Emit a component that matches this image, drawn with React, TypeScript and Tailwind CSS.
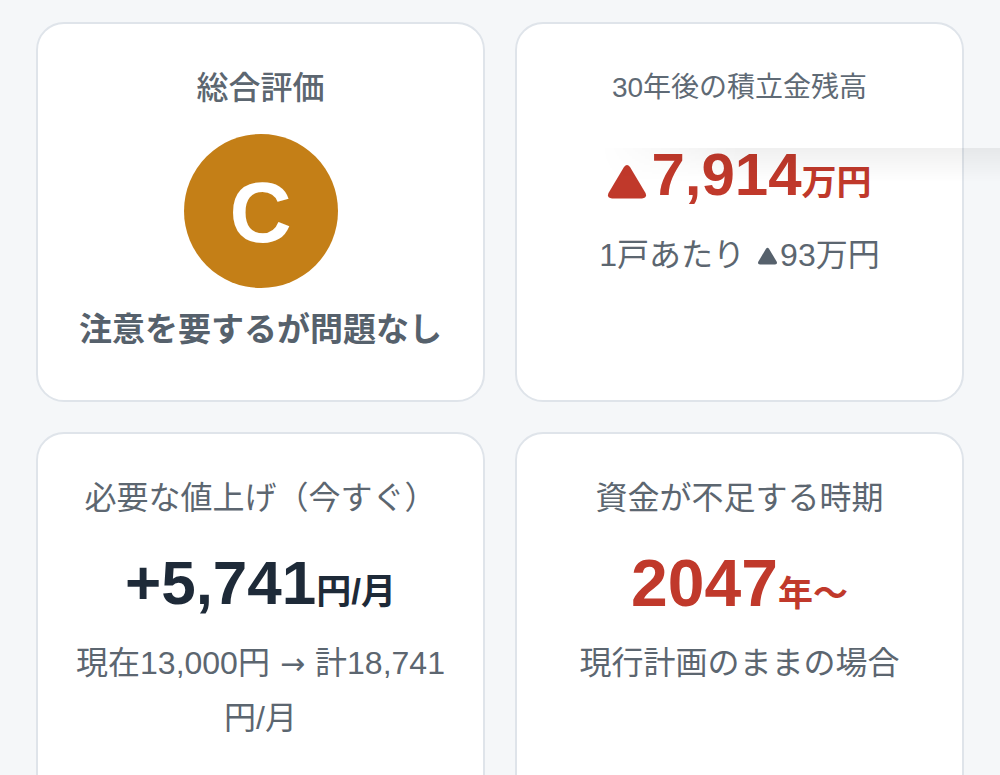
import React from "react";

const font = { fontFamily: '"Liberation Sans", "Noto Sans CJK JP", sans-serif' };
const arrowFont = { fontFamily: '"DejaVu Sans", sans-serif' };

function Tri({ w, h, color, className }: { w: number; h: number; color: string; className?: string }) {
  return (
    <svg width={w} height={h} viewBox="0 0 40 36" className={className}>
      <path
        d="M17 3.5 Q20 -0.5 23 3.5 L38.5 29.5 Q40.5 34.5 35 35 L5 35 Q-0.5 34.5 1.5 29.5 Z"
        fill={color}
      />
    </svg>
  );
}

function Card({ children }: { children: React.ReactNode }) {
  return (
    <div className="h-[380px] rounded-[28px] border-2 border-[#dfe4ea] bg-white px-[28px] pt-[40px] flex flex-col items-center text-center">
      {children}
    </div>
  );
}

export default function App() {
  return (
    <div style={font} className="relative min-h-[775px] overflow-hidden bg-[#f5f7f9] px-[36px] pt-[22px]">
      <div className="grid grid-cols-2 gap-[30px]">
        <Card>
          <div className="text-[32px] leading-[48px] font-medium text-[#5c6670]">総合評価</div>
          <div className="mt-[22px] flex h-[154px] w-[154px] items-center justify-center rounded-full bg-[#c47f17] text-[86px] font-bold leading-none text-white">
            <span className="mt-[2px]">C</span>
          </div>
          <div className="mt-[18px] text-[33px] leading-[48px] font-bold text-[#56616c]">注意を要するが問題なし</div>
        </Card>
        <Card>
          <div className="text-[28px] leading-[48px] text-[#5f6a75]">30年後の積立金残高</div>
          <div className="mt-[27px] flex items-baseline font-bold leading-[72px] text-[#c0392b]">
            <Tri w={40} h={37} color="#c0392b" className="mr-[4px] self-center mt-[4px]" />
            <span className="text-[60px]">7,914</span>
            <span className="text-[35px]">万円</span>
          </div>
          <div className="mt-[10px] flex items-center text-[32px] leading-[52px] text-[#5c6670]">
            <span>1戸あたり</span>
            <Tri w={21} h={18} color="#56616c" className="ml-[12px] mr-[2px] mt-[2px]" />
            <span>93万円</span>
          </div>
        </Card>
        <Card>
          <div className="text-[32px] leading-[48px] text-[#5c6670]">必要な値上げ（今すぐ）</div>
          <div className="mt-[25px] flex items-baseline font-bold leading-[72px] text-[#1e2a38]">
            <span className="text-[62px]">+5,741</span>
            <span className="text-[35px]">円/月</span>
          </div>
          <div className="mt-[8px] flex flex-col items-center text-[32px] leading-[55px] text-[#5c6670]">
            <div className="flex items-center whitespace-nowrap">
              <span>現在13,000円</span>
              <span style={arrowFont} className="mx-[10px] text-[30px]">→</span>
              <span>計18,741</span>
            </div>
            <div>円/月</div>
          </div>
        </Card>
        <Card>
          <div className="text-[32px] leading-[48px] text-[#5c6670]">資金が不足する時期</div>
          <div className="mt-[25px] flex items-baseline font-bold leading-[72px] text-[#c0392b]">
            <span className="text-[66px]">2047</span>
            <span className="text-[35px]">年〜</span>
          </div>
          <div className="mt-[6px] text-[32px] leading-[55px] text-[#5c6670]">現行計画のままの場合</div>
        </Card>
      </div>
      <div className="pointer-events-none absolute left-[600px] top-[148px] h-[34px] w-[400px] bg-gradient-to-b from-black/[0.06] to-transparent [mask-image:linear-gradient(to_right,transparent,black_35%)]" />
    </div>
  );
}
